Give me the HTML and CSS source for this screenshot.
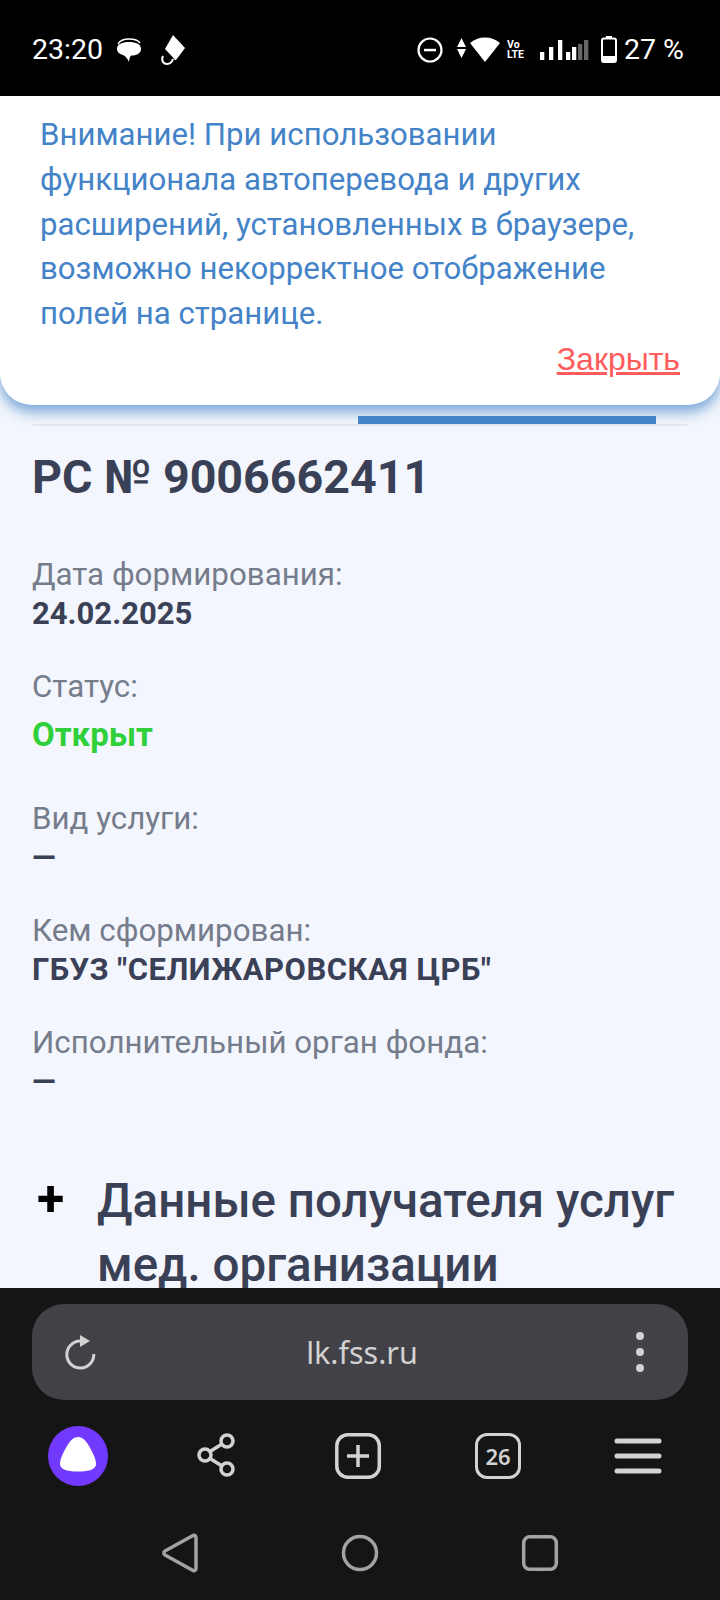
FILE: index.html
```html
<!DOCTYPE html>
<html lang="ru">

<head>
    <meta charset="UTF-8">
    <meta name="viewport" content="width=device-width, initial-scale=1.0">
    <title>РС № 9006662411</title>
    <link rel="stylesheet" href="styles.css">
</head>

<body>
    <!-- status bar -->
    <header class="status">
        <div class="status-left">
            <span class="time">23:20</span>
            <svg class="ic-chat" width="24" height="24" viewBox="0 0 24 24">
                <path d="M1 6C3 2.500 7 1 12 1C17 1 21 2 23 5" fill="none" stroke="#fff" stroke-width="1.500"/>
                <path d="M0 11C0 6 5 4 12 4C19 4 24 6 24 11C24 15 20 17.500 15 17.500C13.500 17.500 12.500 19 12 24C10.500 21 9 18.500 6 17C2 16 0 14 0 11Z" fill="#fff"/>
            </svg>
            <svg class="ic-kite" width="24" height="30" viewBox="0 0 24 30">
                <path d="M12 0L24 13L15 25C13.500 25 13 24 12.500 23L4 14Z" fill="#fff"/>
                <path d="M2 21C0 25 2 29 6 29C9 29 11 27 12 24" fill="none" stroke="#fff" stroke-width="2"/>
            </svg>
        </div>
        <div class="status-right">
            <svg class="ic-dnd" width="26" height="26" viewBox="0 0 26 26">
                <circle cx="13" cy="13" r="11.500" fill="none" stroke="#fff" stroke-width="2.200"/>
                <rect x="7" y="11.800" width="12" height="2.500" fill="#fff"/>
            </svg>
            <svg class="ic-wifi" width="43" height="25" viewBox="0 0 43 25">
                <path d="M0 10L4.500 1L9 10ZM0 12L9 12L4.500 21Z" fill="#fff"/>
                <path d="M13 6C17 2.500 22 0.500 28 0.500C34 0.500 39 2.500 43 6L28 25Z" fill="#fff"/>
            </svg>
            <span class="volte">Vo<br>LTE</span>
            <svg class="ic-signal" width="49" height="20" viewBox="0 0 49 20">
                <rect x="0" y="12" width="4.300" height="8" fill="#fff"/>
                <rect x="9" y="7" width="4.300" height="13" fill="#fff"/>
                <rect x="18" y="0" width="4.300" height="20" fill="#fff"/>
                <rect x="26" y="12" width="4.300" height="8" fill="#fff"/>
                <rect x="32" y="7" width="4.300" height="13" fill="#fff"/>
                <rect x="38" y="4" width="4.300" height="16" fill="#666"/>
                <rect x="44" y="0" width="4.300" height="20" fill="#666"/>
            </svg>
            <svg class="ic-batt" width="16" height="27" viewBox="0 0 16 27">
                <rect x="5" y="0" width="6" height="3" fill="#fff"/>
                <rect x="1" y="2.500" width="14" height="23.500" rx="2" fill="none" stroke="#fff" stroke-width="2"/>
                <rect x="2" y="20" width="12" height="6" fill="#fff"/>
            </svg>
            <span class="percent">27 %</span>
        </div>
    </header>

    <main class="page">
        <div class="notice">
            <p class="notice-text">Внимание! При использовании функционала автоперевода и других расширений, установленных в браузере, возможно некорректное отображение полей на странице.</p>
            <div class="notice-actions"><a class="notice-close" href="#">Закрыть</a></div>
        </div>

        <div class="tabs"><div class="tab-active"></div></div>

        <h1 class="title">РС № 9006662411</h1>

        <div class="field">
            <div class="label">Дата формирования:</div>
            <div class="value">24.02.2025</div>
        </div>
        <div class="field field-status">
            <div class="label">Статус:</div>
            <div class="value value-open">Открыт</div>
        </div>
        <div class="field">
            <div class="label">Вид услуги:</div>
            <div class="value">—</div>
        </div>
        <div class="field">
            <div class="label">Кем сформирован:</div>
            <div class="value value-org">ГБУЗ "СЕЛИЖАРОВСКАЯ ЦРБ"</div>
        </div>
        <div class="field">
            <div class="label">Исполнительный орган фонда:</div>
            <div class="value">—</div>
        </div>

        <section class="section-head">
            <span class="plus">+</span>
            <h2 class="section-title">Данные получателя услуг мед. организации</h2>
        </section>
    </main>

    <footer class="browser">
        <div class="address">
            <svg width="32" height="36" viewBox="0 0 32 36">
                <path d="M16 7A13.500 13.500 0 1 0 29.800 20" fill="none" stroke="#d2d2d2" stroke-width="3"/>
                <path d="M16 1L26 7L16 13Z" fill="#d2d2d2"/>
            </svg>
            <span class="url">lk.fss.ru</span>
            <svg width="8" height="40" viewBox="0 0 8 40">
                <circle cx="4" cy="4" r="4" fill="#d2d2d2"/>
                <circle cx="4" cy="20" r="4" fill="#d2d2d2"/>
                <circle cx="4" cy="36" r="4" fill="#d2d2d2"/>
            </svg>
        </div>

        <nav class="tools">
            <svg class="tool" width="60" height="60" viewBox="0 0 60 60">
                <circle cx="30" cy="30" r="30" fill="#7239ff"/>
                <path d="M30 11C35 11 38 15 41 20C45 27 48 33 48 38C48 43 42 45.500 30 45.500C18 45.500 12 43 12 38C12 33 15 27 19 20C22 15 25 11 30 11Z" fill="#fff"/>
            </svg>
            <svg class="tool" width="60" height="60" viewBox="0 0 60 60">
                <g fill="none" stroke="#d2d2d2" stroke-width="3.500">
                    <circle cx="17" cy="29" r="6"/>
                    <circle cx="39" cy="15" r="6"/>
                    <circle cx="39" cy="43" r="6"/>
                    <path d="M22 25.500L34 18M22 32.500L34 40"/>
                </g>
            </svg>
            <svg class="tool" width="60" height="60" viewBox="0 0 60 60">
                <rect x="8.800" y="8.800" width="42.500" height="42.500" rx="11" fill="none" stroke="#d2d2d2" stroke-width="3.500"/>
                <path d="M30 19V41M19 30H41" stroke="#d2d2d2" stroke-width="3.500"/>
            </svg>
            <div class="tabs-count">26</div>
            <svg class="tool" width="60" height="60" viewBox="0 0 60 60">
                <path d="M9 15H51M9 30H51M9 45H51" stroke="#d2d2d2" stroke-width="5" stroke-linecap="round"/>
            </svg>
        </nav>

        <div class="sysnav">
            <svg width="40" height="40" viewBox="0 0 40 40">
                <path d="M33 2.500C35 2 36 3 36 5V35C36 37 35 38 33 37.500L5 22C3.500 21 3.500 19 5 18Z" fill="none" stroke="#a3a3a3" stroke-width="3.500" stroke-linejoin="round"/>
            </svg>
            <svg width="40" height="40" viewBox="0 0 40 40">
                <circle cx="20" cy="20" r="16.500" fill="none" stroke="#a3a3a3" stroke-width="3.500"/>
            </svg>
            <svg width="40" height="40" viewBox="0 0 40 40">
                <rect x="3.700" y="3.700" width="32.600" height="32.600" rx="6" fill="none" stroke="#a3a3a3" stroke-width="3.500"/>
            </svg>
        </div>
    </footer>
</body>

</html>
```

FILE: styles.css
```css
* {
    box-sizing: border-box;
}

html,
body {
    height: 100%;
}

body {
    display: flex;
    flex-direction: column;
    height: 1600px;
    margin: 0;
    overflow: hidden;
    font-family: Roboto, "Noto Sans", sans-serif;
    background: #000;
}

/* status bar */
.status {
    display: flex;
    justify-content: space-between;
    align-items: center;
    height: 96px;
    padding: 3px 36px 0 32px;
    color: #fff;
    background: #000;
}

.status-left,
.status-right {
    display: flex;
    align-items: center;
}

.time {
    font-size: 28.500px;
}

.ic-chat {
    margin-left: 14px;
}

.ic-kite {
    margin-left: 20px;
}

.ic-wifi {
    margin-left: 14px;
}

.volte {
    width: 22px;
    margin-left: 7px;
    font-size: 10.500px;
    font-weight: 700;
    line-height: 10px;
}

.ic-signal {
    margin-left: 11px;
}

.ic-batt {
    margin-left: 12px;
}

.percent {
    margin-left: 7px;
    font-size: 28.500px;
}

/* page */
.page {
    position: relative;
    flex: 1;
    min-height: 0;
    overflow: hidden;
    padding: 320px 32px 0;
    background: #f3f6fc;
}

.notice {
    position: absolute;
    top: 0;
    left: 0;
    right: 0;
    height: 309px;
    padding: 17px 40px 0;
    background: #fff;
    border-radius: 0 0 32px 32px;
    box-shadow: 0 7px 13px rgba(68, 133, 199, 0.7);
    z-index: 2;
}

.notice-text {
    margin: 0;
    font-size: 31.200px;
    line-height: 44.800px;
    color: #4483c7;
}

.notice-actions {
    margin-top: 4px;
    text-align: right;
}

.notice-close {
    font-family: "Liberation Sans", sans-serif;
    font-size: 32px;
    color: #ff5c5c;
}

.tabs {
    height: 10px;
    border-bottom: 2px solid #e4e8ee;
}

.tab-active {
    width: 298px;
    height: 8px;
    margin-left: 326px;
    background: #4485c7;
}

.title {
    margin: 23px 0 0;
    font-size: 46.600px;
    line-height: 56px;
    font-weight: 700;
    color: #3a4056;
}

.field {
    margin-bottom: 34px;
}

.title + .field {
    margin-top: 50px;
}

.field-status {
    margin-bottom: 42px;
}

.label {
    font-size: 31.300px;
    line-height: 39px;
    color: #757c8c;
}

.value {
    font-size: 31px;
    line-height: 39px;
    font-weight: 700;
    color: #3a4056;
}

.value-open {
    margin-top: 7px;
    font-size: 33px;
    line-height: 44px;
    color: #2fd03a;
}

.value-org {
    letter-spacing: 0.500px;
}

.section-head {
    display: flex;
    margin-top: 68px;
}

.plus {
    width: 65px;
    padding-left: 5px;
    font-size: 50px;
    line-height: 60px;
    font-weight: 700;
    color: #000;
}

.section-title {
    flex: 1;
    margin: 0;
    font-size: 47.500px;
    line-height: 64px;
    font-weight: 500;
    color: #3a4056;
}

/* browser chrome */
.browser {
    height: 312px;
    padding-top: 16px;
    background: #151516;
}

.address {
    display: flex;
    justify-content: space-between;
    align-items: center;
    height: 96px;
    margin: 0 32px;
    padding: 0 44px 0 32px;
    border-radius: 32px;
    background: #414147;
}

.url {
    margin-right: 8px;
    font-family: "Noto Sans", sans-serif;
    font-size: 30.500px;
    color: #d2d2d2;
}

.tools {
    display: flex;
    justify-content: space-between;
    align-items: center;
    margin-top: 26px;
    padding: 0 52px 0 48px;
}

.tool {
    display: block;
}

.tabs-count {
    display: flex;
    justify-content: center;
    align-items: center;
    width: 46px;
    height: 46px;
    margin: 0 7px;
    border: 3.500px solid #d2d2d2;
    border-radius: 12px;
    font-family: "Noto Sans", sans-serif;
    font-size: 22px;
    font-weight: 600;
    color: #d2d2d2;
}

.sysnav {
    display: flex;
    justify-content: space-between;
    margin-top: 47px;
    padding: 0 160px;
}
```
